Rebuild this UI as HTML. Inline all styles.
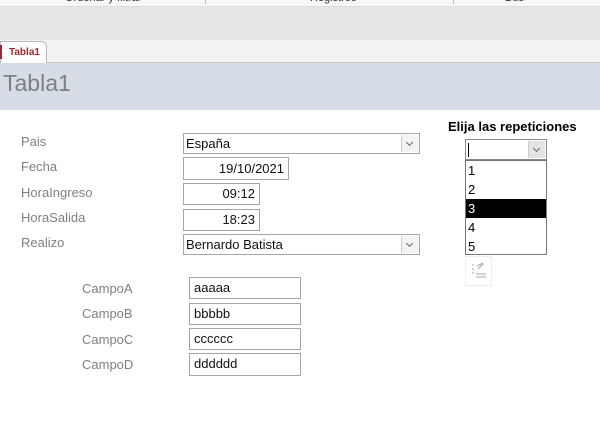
<!DOCTYPE html>
<html><head><style>
*{margin:0;padding:0;box-sizing:border-box}
body{width:600px;height:436px;overflow:hidden;background:#fff;font-family:"Liberation Sans",sans-serif;position:relative}
.a{position:absolute}
.lbl{position:absolute;font-size:13px;color:#808080}
.box{position:absolute;border:1px solid #a6a6a6;background:#fff;font-size:13px;color:#111;padding:0 4px;line-height:19px}
.r{text-align:right}
.dd{position:absolute;right:1px;top:1px;bottom:1px;width:17px;border-left:1px solid #ccc;background:#f3f3f3}
.dd:after{content:"";position:absolute;left:5px;top:5px;width:4px;height:4px;border-right:1px solid #666;border-bottom:1px solid #666;transform:rotate(45deg)}
</style></head><body>
<div class="a" style="left:0;top:0;width:600px;height:7px;background:#f7f7f7;border-bottom:1px solid #ddd;overflow:hidden;font-size:11px;color:#333">
<span class="a" style="left:65px;top:-8px">Ordenar y filtrar</span>
<span class="a" style="left:310px;top:-8px">Registros</span>
<span class="a" style="left:505px;top:-8px">Bus</span>
<span class="a" style="left:205px;top:0;width:1px;height:4px;background:#bbb"></span>
<span class="a" style="left:453px;top:0;width:1px;height:4px;background:#bbb"></span>
</div>
<div class="a" style="left:0;top:7px;width:600px;height:33px;background:#e6e6e6"></div>
<div class="a" style="left:0;top:40px;width:600px;height:23px;background:#f3f2f1;border-bottom:1px solid #c8c8c8"></div>
<div class="a" style="left:0;top:41px;width:47px;height:23px;background:#fff;border:1px solid #bbb;border-bottom:none;border-radius:0 6px 0 0;font-size:10px;font-weight:bold;color:#a4262c;padding:5px 0 0 8px">Tabla1</div>
<div class="a" style="left:0;top:45px;width:2px;height:14px;background:#a4262c"></div>
<div class="a" style="left:0;top:63px;width:600px;height:47px;background:#d6dde7"></div>
<div class="a" style="left:3px;top:70px;font-size:23px;color:#7f7f7f">Tabla1</div>

<div class="lbl" style="left:21px;top:134px">Pais</div>
<div class="lbl" style="left:21px;top:159px">Fecha</div>
<div class="lbl" style="left:21px;top:185px">HoraIngreso</div>
<div class="lbl" style="left:21px;top:210px">HoraSalida</div>
<div class="lbl" style="left:21px;top:235px">Realizo</div>

<div class="box" style="left:183px;top:133px;width:237px;height:21px;padding-left:2px">España<div class="dd"></div></div>
<div class="box r" style="left:183px;top:157px;width:106px;height:23px;line-height:21px">19/10/2021</div>
<div class="box r" style="left:183px;top:183px;width:77px;height:22px;line-height:20px">09:12</div>
<div class="box r" style="left:183px;top:209px;width:77px;height:22px;line-height:20px">18:23</div>
<div class="box" style="left:183px;top:234px;width:237px;height:21px;padding-left:2px">Bernardo Batista<div class="dd"></div></div>

<div class="lbl" style="left:82px;top:281px">CampoA</div>
<div class="lbl" style="left:82px;top:306px">CampoB</div>
<div class="lbl" style="left:82px;top:332px">CampoC</div>
<div class="lbl" style="left:82px;top:357px">CampoD</div>
<div class="box" style="left:189px;top:277px;width:112px;height:22px">aaaaa</div>
<div class="box" style="left:189px;top:303px;width:112px;height:22px">bbbbb</div>
<div class="box" style="left:189px;top:328px;width:112px;height:22px">cccccc</div>
<div class="box" style="left:189px;top:353px;width:112px;height:23px">dddddd</div>

<div class="a" style="left:448px;top:119px;font-size:13px;font-weight:bold;color:#000">Elija las repeticiones</div>
<div class="box" style="left:465px;top:139px;width:82px;height:21px;border-color:#888"><div class="a" style="left:2px;top:3px;width:1px;height:14px;background:#000"></div><div class="dd" style="background:#e3e3e3"></div></div>
<div class="a" style="left:465px;top:160px;width:82px;height:95px;border:1px solid #777;font-size:13px;line-height:19px;color:#000">
<div style="padding-left:2px">1</div><div style="padding-left:2px">2</div><div style="padding-left:2px;background:#000;color:#fff">3</div><div style="padding-left:2px">4</div><div style="padding-left:2px">5</div>
</div>
<div class="a" style="left:465px;top:256px;width:27px;height:30px;border:1px solid #eee;background:#fff">
<svg width="27" height="30" viewBox="0 0 27 30" style="position:absolute;left:0;top:0"><g stroke="#9ab" stroke-width="1"><path d="M6 8h2M6 12h2M6 16h2"/><path d="M11 9l6-3M12 12l5-5M10 17h10M10 20h10"/></g></svg>
</div>
</body></html>
